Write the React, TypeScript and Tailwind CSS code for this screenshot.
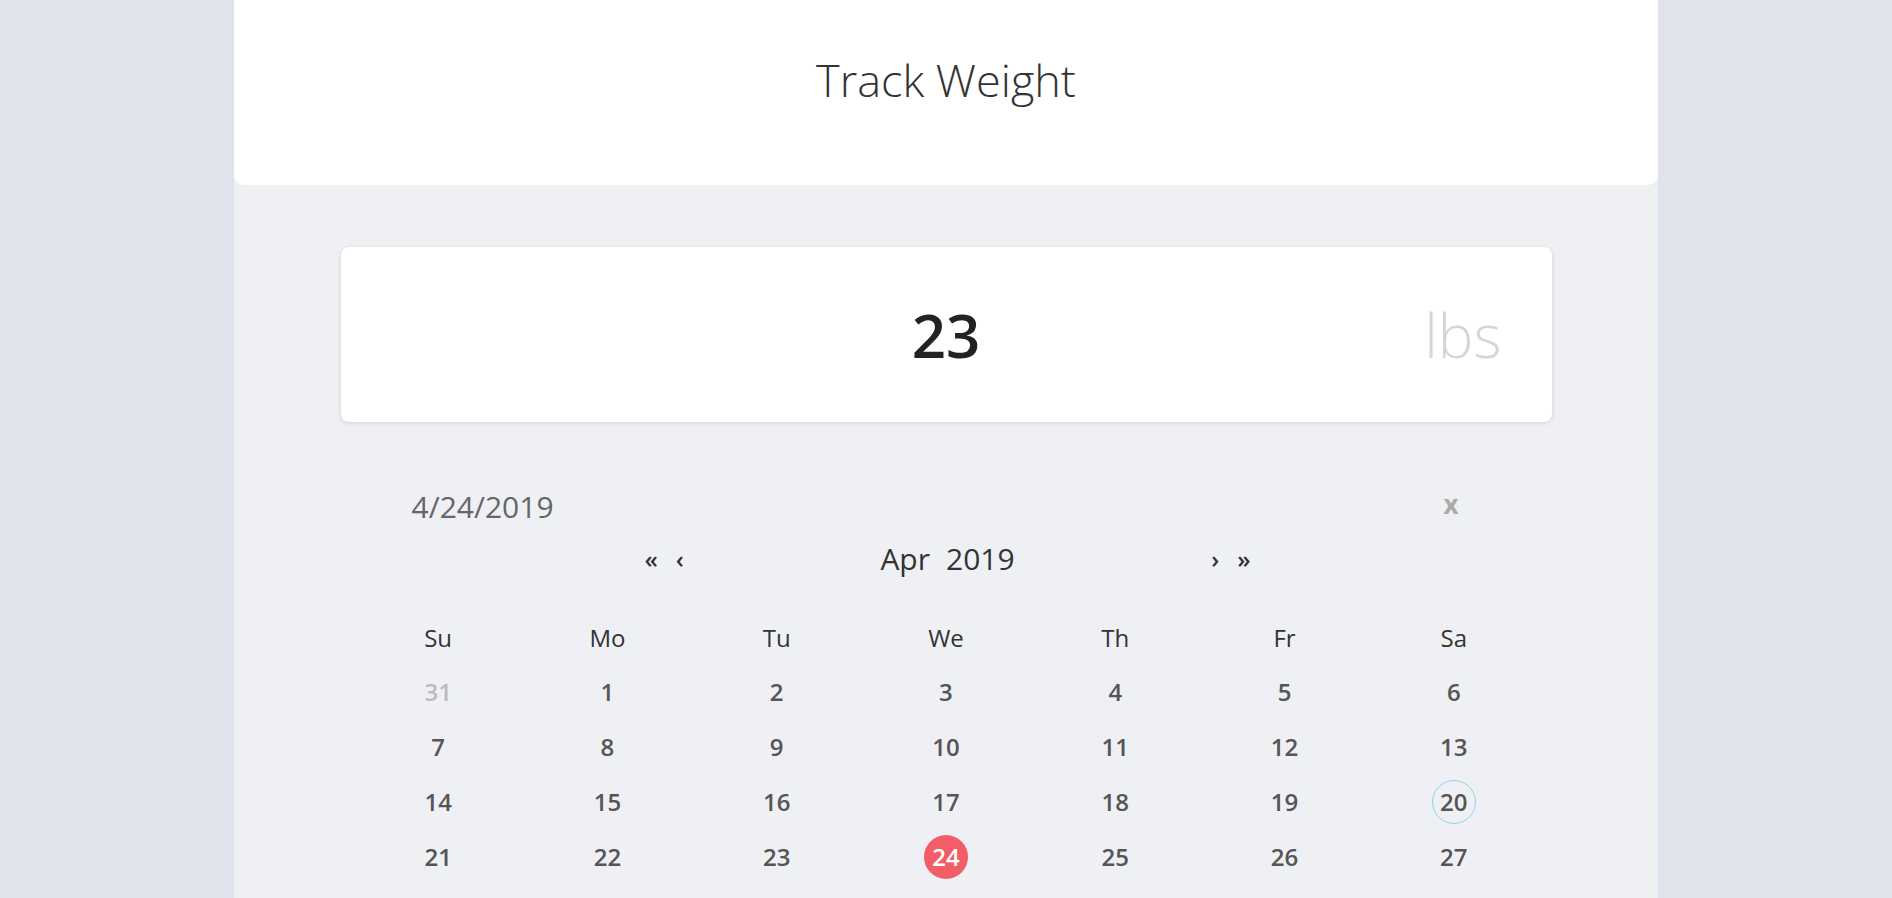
import { useState } from "react";

const weekDays = ["Su", "Mo", "Tu", "We", "Th", "Fr", "Sa"];

const weeks = [
  [31, 1, 2, 3, 4, 5, 6],
  [7, 8, 9, 10, 11, 12, 13],
  [14, 15, 16, 17, 18, 19, 20],
  [21, 22, 23, 24, 25, 26, 27],
];

export default function App() {
  const [weight] = useState("23");
  const selected = 24;
  const today = 20;

  return (
    <div className="min-h-screen bg-[#e0e3eb] font-['Open_Sans',sans-serif]">
      <div className="mx-auto min-h-screen w-[1424px] bg-[#eff0f4]">
        {/* header */}
        <div className="flex h-[185px] items-center justify-center rounded-b-[10px] bg-white pb-[27px]">
          <h1 className="text-[45px] font-light leading-none text-[#333]">Track Weight</h1>
        </div>

        <div className="mx-auto w-[1211px] pt-[62px]">
          {/* weight input card */}
          <div className="grid h-[175px] grid-cols-[1fr_auto_1fr] items-center rounded-[8px] bg-white shadow-[0_1px_4px_rgba(0,0,0,0.13)]">
            <div />
            <span className="text-[60px] font-semibold leading-none text-[#222]">{weight}</span>
            <span className="justify-self-end pr-[50px] text-[60px] font-light leading-none text-[#d6d6d6]">
              lbs
            </span>
          </div>

          {/* date field */}
          <div className="mt-[65px] flex h-[40px] items-center justify-between pl-[71px] pr-[93px]">
            <span className="text-[30px] leading-none text-[#666]">4/24/2019</span>
            <button type="button" className="mb-[6px] text-[26px] font-bold leading-none text-[#aaa]">
              x
            </button>
          </div>

          {/* month nav */}
          <div className="ml-[304px] mt-[12px] flex h-[40px] w-[606px] items-center justify-between text-[#333]">
            <div className="flex items-center gap-[18px] text-[24px] font-semibold leading-none">
              <span>«</span>
              <span>‹</span>
            </div>
            <div className="flex items-center gap-[16px] text-[30px] leading-none">
              <span>Apr</span>
              <span>2019</span>
            </div>
            <div className="flex items-center gap-[18px] text-[24px] font-semibold leading-none">
              <span>›</span>
              <span>»</span>
            </div>
          </div>

          {/* calendar grid */}
          <div className="mt-[31px] px-[13px]">
            <div className="grid h-[55px] grid-cols-7 items-center text-center text-[24px] leading-none text-[#333]">
              {weekDays.map((d) => (
                <span key={d}>{d}</span>
              ))}
            </div>
            {weeks.map((week, wi) => (
              <div key={wi} className="grid h-[55px] grid-cols-7 items-center justify-items-center">
                {week.map((day) => {
                  const outside = wi === 0 && day > 20;
                  let cls = "text-[#555]";
                  if (outside) cls = "text-[#bbb]";
                  if (day === selected && !outside) cls = "rounded-full bg-[#f35d67] text-white";
                  if (day === today && !outside) cls = "rounded-full border border-[#8fd3f0] text-[#555]";
                  return (
                    <span
                      key={day}
                      className={`-mt-[2px] flex h-[44px] w-[44px] items-center justify-center text-[24px] font-semibold leading-none ${cls}`}
                    >
                      {day}
                    </span>
                  );
                })}
              </div>
            ))}
          </div>
        </div>
      </div>
    </div>
  );
}
